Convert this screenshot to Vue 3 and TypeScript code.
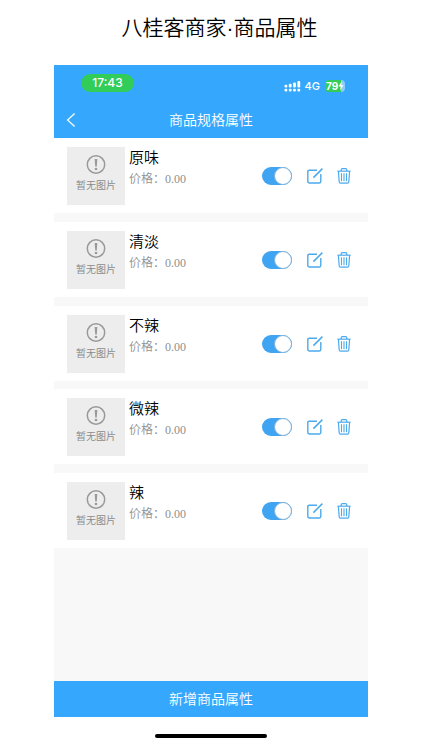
<script setup lang="ts">
import { ref } from 'vue'

interface Attribute {
  id: number
  name: string
  price: string
  enabled: boolean
}

const attributes = ref<Attribute[]>([
  { id: 1, name: '原味', price: '0.00', enabled: true },
  { id: 2, name: '清淡', price: '0.00', enabled: true },
  { id: 3, name: '不辣', price: '0.00', enabled: true },
  { id: 4, name: '微辣', price: '0.00', enabled: true },
  { id: 5, name: '辣', price: '0.00', enabled: true },
])

function remove(id: number): void {
  attributes.value = attributes.value.filter((a) => a.id !== id)
}
</script>

<template>
  <div class="page">
    <h1 class="page-title">八桂客商家·商品属性</h1>

    <main class="phone">
      <header class="top">
        <div class="status">
          <span class="clock">17:43</span>
          <div class="status-right">
            <svg class="signal" viewBox="0 0 17 12" aria-hidden="true">
              <g fill="#fff">
                <rect x="0.5" y="4.7" width="2.8" height="2.8" rx="1" />
                <rect x="4.8" y="3.7" width="2.8" height="3.8" rx="1" />
                <rect x="9.1" y="2.4" width="2.8" height="5.1" rx="1" />
                <rect x="13.4" y="1" width="2.8" height="6.5" rx="1" />
                <rect x="0.5" y="8.7" width="2.8" height="2.8" rx="1" />
                <rect x="4.8" y="8.7" width="2.8" height="2.8" rx="1" />
                <rect x="9.1" y="8.7" width="2.8" height="2.8" rx="1" />
                <rect x="13.4" y="8.7" width="2.8" height="2.8" rx="1" />
              </g>
            </svg>
            <span class="network">4G</span>
            <span class="battery">
              <span class="battery-level">79</span>
              <svg class="bolt" viewBox="0 0 6 10" aria-hidden="true">
                <path d="M3.8 0.6 0.4 5.6H2.7L2 9.4 5.6 4.3H3.3Z" fill="#fff" />
              </svg>
            </span>
          </div>
        </div>
        <nav class="nav">
          <button class="back" type="button" aria-label="返回">
            <svg viewBox="0 0 10 16" aria-hidden="true">
              <path d="M8.6 1.5 1.6 8l7 6.5" fill="none" stroke="#fff" stroke-width="1.2" />
            </svg>
          </button>
          <h2 class="nav-title">商品规格属性</h2>
        </nav>
      </header>

      <ul class="list">
        <li v-for="item in attributes" :key="item.id" class="item">
          <div class="thumb">
            <svg viewBox="0 0 20 20" aria-hidden="true">
              <circle cx="10" cy="9.5" r="8.7" fill="none" stroke="#999" stroke-width="1.5" />
              <path d="M8.7 4.1h2.6l-.5 7.4H9.2Z" fill="#999" />
              <circle cx="10" cy="14" r="1.3" fill="#999" />
            </svg>
            <span>暂无图片</span>
          </div>
          <div class="info">
            <h3 class="name">{{ item.name }}</h3>
            <p class="price">价格：{{ item.price }}</p>
          </div>
          <div class="actions">
            <input v-model="item.enabled" class="switch" type="checkbox" role="switch" :aria-label="item.name" />
            <button class="icon edit" type="button" aria-label="编辑">
              <svg viewBox="0 0 16 16" aria-hidden="true" fill="none" stroke="#4baaec">
                <path d="M10 2.2H2.2Q.8 2.2.8 3.6v10q0 1.4 1.4 1.4h10.2q1.4 0 1.4-1.4V6" stroke-width="1.4" />
                <path d="M6.4 9.6 15.4 0.6" stroke-width="1.5" />
              </svg>
            </button>
            <button class="icon trash" type="button" aria-label="删除" @click="remove(item.id)">
              <svg viewBox="0 0 14 16" aria-hidden="true" fill="none" stroke="#4baaec">
                <path d="M0.4 3.2h13.2" stroke-width="1.2" />
                <path d="M4.2 3V1.8Q4.2.6 5.4.6h3.2q1.2 0 1.2 1.2V3" stroke-width="1.2" />
                <path d="M1.4 3.4 2.2 14q.1 1.2 1.3 1.2h7q1.2 0 1.3-1.2l.8-10.6" stroke-width="1.2" />
                <path d="M4.5 5.2v8M7 5.2v8M9.5 5.2v8" stroke-width="1.1" />
              </svg>
            </button>
          </div>
        </li>
      </ul>

      <button class="add" type="button">新增商品属性</button>
    </main>

    <div class="home-bar"></div>
  </div>
</template>

<style>
body {
  background: #fff;
}
</style>

<style scoped>
.page {
  box-sizing: border-box;
  min-height: 100vh;
  padding: 0 54px 12px;
  display: flex;
  flex-direction: column;
  font-family: 'Liberation Sans', 'Noto Sans CJK SC', sans-serif;
}

h1,
h2,
h3,
p,
ul {
  margin: 0;
  padding: 0;
  font-weight: 400;
}

button {
  padding: 0;
  border: 0;
  background: none;
  font-family: inherit;
  cursor: pointer;
}

svg {
  display: block;
}

.page-title {
  padding: 12px 0 21px 17px;
  font-size: 21px;
  line-height: 32px;
  font-weight: 350;
  text-align: center;
  white-space: nowrap;
  color: #000;
}

.phone {
  flex: 1;
  display: flex;
  flex-direction: column;
  background: #f8f8f8;
}

.top {
  background: #35a8fe;
  color: #fff;
}

.status {
  display: flex;
  justify-content: space-between;
  align-items: center;
  height: 36px;
  padding: 0 23px 0 27px;
  font-family: Inter, 'Liberation Sans', sans-serif;
}

.clock {
  width: 53px;
  border-radius: 9px;
  background: #32cc58;
  font-size: 12px;
  line-height: 18px;
  font-weight: 500;
  text-align: center;
}

.status-right {
  display: flex;
  align-items: center;
  padding-top: 6px;
}

.signal {
  width: 17px;
  height: 12px;
}

.network {
  margin: 0 5px 0 4px;
  font-size: 11px;
  line-height: 14px;
  font-weight: 500;
}

.battery {
  display: flex;
  align-items: center;
  width: 20px;
  height: 12px;
  border-radius: 4px;
  background: linear-gradient(90deg, #32cc58 78%, #8fcdf8 78%);
}

.battery-level {
  padding-left: 1px;
  font-size: 10px;
  line-height: 12px;
  font-weight: 700;
}

.bolt {
  width: 6px;
  height: 10px;
}

.nav {
  display: grid;
  grid-template-columns: 34px 1fr 34px;
  align-items: center;
  height: 37px;
}

.back {
  display: flex;
  justify-content: center;
}

.back svg {
  width: 10px;
  height: 16px;
}

.nav-title {
  font-size: 14px;
  line-height: 20px;
  font-weight: 350;
  text-align: center;
}

.list {
  display: flex;
  flex-direction: column;
  justify-content: space-between;
  min-height: 410px;
  list-style: none;
}

.item {
  display: flex;
  align-items: flex-start;
  padding: 9px 17px 8px 13px;
  background: #fff;
}

.thumb {
  display: flex;
  flex-direction: column;
  align-items: center;
  gap: 4px;
  box-sizing: border-box;
  width: 58px;
  height: 58px;
  padding-top: 8px;
  background: #ededed;
  color: #8c8c8c;
  font-size: 10px;
  line-height: 14px;
}

.thumb svg {
  width: 20px;
  height: 20px;
}

.info {
  flex: 1;
  padding-left: 4px;
}

.name {
  font-size: 15px;
  line-height: 22px;
  font-weight: 350;
  color: #000;
}

.price {
  font-family: 'Liberation Serif', 'Noto Sans CJK SC', serif;
  font-size: 12px;
  line-height: 20px;
  font-weight: 350;
  color: #909090;
}

.actions {
  display: flex;
  align-items: center;
  height: 58px;
}

.switch {
  appearance: none;
  display: flex;
  align-items: center;
  box-sizing: border-box;
  width: 30px;
  height: 18px;
  margin: 0;
  border-radius: 9px;
  background: #d5d5d5;
  cursor: pointer;
}

.switch::before {
  content: '';
  box-sizing: border-box;
  width: 18px;
  height: 18px;
  border: 1px solid #7fb2dc;
  border-radius: 50%;
  background: #fff;
}

.switch:checked {
  justify-content: flex-end;
  background: #3fa5f3;
}

.icon {
  height: 16px;
}

.edit {
  width: 16px;
  margin-left: 15px;
}

.trash {
  width: 14px;
  margin-left: 14px;
}

.add {
  height: 36px;
  margin-top: auto;
  background: #35a8fe;
  color: #fff;
  font-size: 14px;
  line-height: 36px;
  font-weight: 350;
}

.home-bar {
  align-self: center;
  width: 112px;
  height: 4px;
  margin-top: 17px;
  border-radius: 2px;
  background: #000;
}
</style>
